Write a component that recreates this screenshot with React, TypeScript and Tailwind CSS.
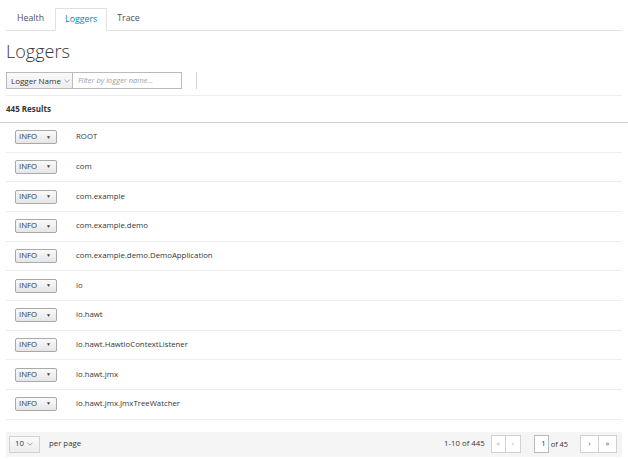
import React from "react";

const loggers = [
  "ROOT",
  "com",
  "com.example",
  "com.example.demo",
  "com.example.demo.DemoApplication",
  "io",
  "io.hawt",
  "io.hawt.HawtioContextListener",
  "io.hawt.jmx",
  "io.hawt.jmx.JmxTreeWatcher",
];

function Caret() {
  return (
    <svg width="6" height="4" viewBox="0 0 6 4" className="ml-[3px]">
      <path d="M0.5 0.8 L3 3.2 L5.5 0.8" fill="none" stroke="#8b8d8f" strokeWidth="0.8" />
    </svg>
  );
}

function LevelSelect() {
  return (
    <div className="w-[42px] h-[14px] border border-[#a9a9a9] rounded-[2px] bg-gradient-to-b from-[#fafafa] to-[#e6e6e6] flex items-center justify-between pl-[3px] pr-[5px] text-[7.8px] text-[#333]">
      <span>INFO</span>
      <span className="text-[5px] text-[#444]">▼</span>
    </div>
  );
}

export default function App() {
  return (
    <div className="w-[628px] h-[459px] bg-white text-[#363636] overflow-hidden" style={{ fontFamily: '"Open Sans", "Liberation Sans", sans-serif' }}>
      {/* tabs */}
      <div className="mx-[6px] pt-[8px] flex border-b border-[#e1e1e1] text-[8.8px]">
        <div className="px-[11px] h-[22px] flex items-center text-[#4d5258]">Health</div>
        <div className="px-[9px] h-[23px] -mb-px flex items-center text-[#0088ce] bg-white border border-[#e1e1e1] border-b-white">Loggers</div>
        <div className="px-[10px] h-[22px] flex items-center text-[#4d5258]">Trace</div>
      </div>

      <h1 className="mx-[6px] mt-[10px] text-[18px] leading-[20px] font-light text-[#363636]">Loggers</h1>

      {/* toolbar */}
      <div className="mx-[6px] mt-[11px] pb-[6px] border-b border-[#ededed] flex items-center">
        <div className="h-[17px] w-[67px] flex items-center pl-[4px] border border-[#bbbbbb] bg-gradient-to-b from-[#fafafa] to-[#ededed] text-[8px] text-[#363636]">
          Logger Name
          <Caret />
        </div>
        <div className="h-[17px] w-[110px] -ml-px flex items-center pl-[5px] border border-[#bbbbbb] text-[7.5px] italic text-[#9c9c9c]">
          Filter by logger name...
        </div>
        <div className="ml-[14px] h-[17px] border-l border-[#d1d1d1]" />
      </div>

      <div className="mx-[6px] h-[26px] flex items-center text-[8px] font-bold text-[#363636]">445 Results</div>
      <div className="border-b border-[#d1d1d1]" />

      {/* rows */}
      <div className="mx-[6px]">
        {loggers.map((name) => (
          <div key={name} className="h-[29.67px] flex items-center border-b border-[#ededed] text-[7.8px] text-[#363636]">
            <div className="ml-[9px] w-[61px]">
              <LevelSelect />
            </div>
            <span>{name}</span>
          </div>
        ))}
      </div>

      {/* footer */}
      <div className="mx-[6px] mt-[12px] h-[25px] bg-[#f5f5f5] flex items-center text-[7.8px] text-[#363636]">
        <div className="ml-[3px] h-[17px] w-[31px] flex items-center pl-[5px] border border-[#d1d1d1] bg-gradient-to-b from-[#fafafa] to-[#ededed]">
          10
          <Caret />
        </div>
        <span className="ml-[9px]">per page</span>
        <div className="flex-1" />
        <span className="mr-[6px]">1-10 of 445</span>
        <div className="flex h-[18px] border border-[#d1d1d1] bg-white text-[#b0b0b0]">
          <div className="w-[14px] flex items-center justify-center border-r border-[#d1d1d1]">«</div>
          <div className="w-[14px] flex items-center justify-center">‹</div>
        </div>
        <div className="ml-[13px] h-[18px] w-[15px] border border-[#bbbbbb] bg-white flex items-center justify-end pr-[2px]">1</div>
        <span className="ml-[2px] mr-[12px] text-[7.4px]">of 45</span>
        <div className="mr-[5px] flex h-[18px] border border-[#d1d1d1] bg-white text-[#4d5258]">
          <div className="w-[18px] flex items-center justify-center border-r border-[#d1d1d1]">›</div>
          <div className="w-[17px] flex items-center justify-center">»</div>
        </div>
      </div>
    </div>
  );
}
